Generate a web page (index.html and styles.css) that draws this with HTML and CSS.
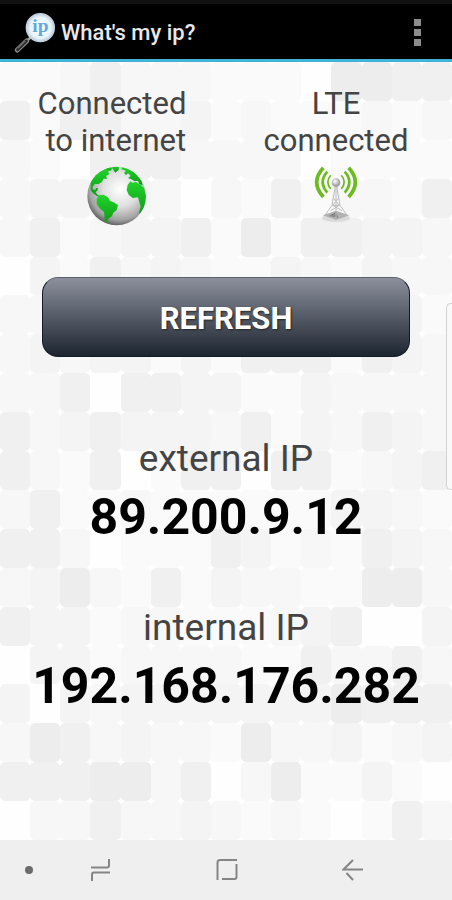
FILE: index.html
```html
<!DOCTYPE html>
<html lang="en">
<head>
	<meta charset="utf-8">
	<meta name="viewport" content="width=device-width, initial-scale=1">
	<title>What's my ip?</title>
	<link rel="stylesheet" href="styles.css">
</head>
<body>
	<header class="action-bar">
		<svg class="logo" viewBox="0 0 126 123" aria-hidden="true">
			<defs>
				<radialGradient id="lens">
					<stop offset="0" stop-color="#ffffff"/>
					<stop offset="0.75" stop-color="#e8f3fb"/>
					<stop offset="1" stop-color="#b9cddb"/>
				</radialGradient>
			</defs>
			<path d="M50 76 L34 91" stroke="#aaa" stroke-width="7"/>
			<path d="M38 87 L10 114" stroke="#8c8c8c" stroke-width="15" stroke-linecap="round"/>
			<path d="M37 87 L11 113" stroke="#2b2b2b" stroke-width="9" stroke-linecap="round"/>
			<path d="M34 87 L12 109" stroke="#b5b5b5" stroke-width="2"/>
			<circle cx="79" cy="47" r="42" fill="url(#lens)" stroke="#c4d3dd" stroke-width="4"/>
			<text class="logo-text" x="79" y="61" text-anchor="middle">ip</text>
		</svg>
		<h1>What's my ip?</h1>
		<button class="menu" aria-label="More options"><i></i><i></i><i></i></button>
	</header>

	<main>
		<div class="mosaic" id="mosaic"></div>

		<div class="content">
			<div class="status-row">
				<div class="status">
					<p>Connected<br>&nbsp;to internet</p>
					<svg class="globe" viewBox="0 0 204 180" aria-hidden="true">
						<defs>
							<radialGradient id="sea" cx="0.56" cy="0.38" r="0.66">
								<stop offset="0" stop-color="#ffffff"/>
								<stop offset="0.45" stop-color="#e0e0e0"/>
								<stop offset="0.8" stop-color="#a2a2a2"/>
								<stop offset="1" stop-color="#4a4a4a"/>
							</radialGradient>
							<linearGradient id="land" x1="0" y1="0" x2="0" y2="1">
								<stop offset="0" stop-color="#1fd62a"/>
								<stop offset="1" stop-color="#0f9a18"/>
							</linearGradient>
							<clipPath id="disc"><circle cx="116" cy="90" r="88"/></clipPath>
						</defs>
						<circle cx="116" cy="90" r="88" fill="url(#sea)"/>
						<g clip-path="url(#disc)" fill="url(#land)">
							<path d="M38 66 L38 48 L52 26 L74 10 L92 5 L100 12 L90 16 L94 24 L84 30 L88 38 L76 38 L72 48 L62 54 L50 54 L44 62 L44 70 L52 72 L54 66 L60 66 L58 74 L52 78 L58 86 L66 90 L56 90 L44 80 L38 72Z"/>
							<path d="M82 10 L94 2 L104 6 L98 14Z M102 2 L124 0 L122 12 L112 20 L106 12Z"/>
							<path d="M134 2 L152 6 L172 22 L190 44 L194 58 L184 54 L180 44 L170 46 L160 40 L150 36 L158 30 L150 22 L144 28 L138 20 L144 14 L130 10Z"/>
							<path d="M149 56 L158 46 L164 50 L174 48 L188 56 L198 66 L204 90 L202 116 L190 138 L182 144 L188 122 L184 108 L180 94 L164 96 L152 86 L146 72Z"/>
							<path d="M56 98 L62 88 L76 86 L90 94 L96 104 L110 110 L120 118 L116 132 L106 140 L102 150 L90 160 L86 172 L80 162 L78 138 L66 128 L56 114Z"/>
						</g>
					</svg>
				</div>
				<div class="status">
					<p>LTE<br>connected</p>
					<svg class="antenna" viewBox="0 0 132 171" fill="none" aria-hidden="true">
						<defs>
							<radialGradient id="ball" cx="0.4" cy="0.35">
								<stop offset="0" stop-color="#ffffff"/>
								<stop offset="1" stop-color="#a3a3a3"/>
							</radialGradient>
						</defs>
						<ellipse cx="66" cy="156" rx="42" ry="12" fill="#dadada"/>
						<path d="M26 148 L66 134 L106 148 L66 162Z" fill="#b2b2b2"/>
						<path d="M44 150 L66 138 L74 156Z" fill="#888"/>
						<path d="M64 60 L54 118 L34 146 M68 60 L78 118 L98 146 M66 62 V156 M58 96 L76 118 L50 134 M74 96 L56 118 L84 134 M54 118 H78" stroke="#bcbcbc" stroke-width="3"/>
						<circle cx="66" cy="50" r="13" fill="url(#ball)"/>
						<g class="waves">
							<path d="M28 5 Q-12 48 28 93 M104 5 Q144 48 104 93" stroke-width="11"/>
							<path d="M40 17 Q12 48 40 80 M92 17 Q120 48 92 80" stroke-width="8"/>
							<path d="M50 28 Q33 48 50 69 M82 28 Q99 48 82 69" stroke-width="5"/>
						</g>
					</svg>
				</div>
			</div>

			<button class="refresh">REFRESH</button>

			<section class="address">
				<h2>external IP</h2>
				<p>89.200.9.12</p>
			</section>
			<section class="address">
				<h2>internal IP</h2>
				<p>192.168.176.282</p>
			</section>
		</div>

		<div class="edge-handle"></div>
	</main>

	<nav class="nav-bar">
		<button aria-label="Hide"><svg viewBox="0 0 22 22"><circle cx="11" cy="11" r="4" fill="#6b6b6b" stroke="none"/></svg></button>
		<button aria-label="Recents"><svg viewBox="0 0 22 22"><path d="M1 8.5 H17 Q19 8.5 19 6.5 V0 M20 13.5 H4 Q2 13.5 2 15.5 V22"/></svg></button>
		<button aria-label="Home"><svg viewBox="0 0 22 22"><path d="M21 1 H4 Q1.500 1 1.500 3.500 V21 M20.500 5 V18 Q20.500 20 18.500 20 H6"/></svg></button>
		<button aria-label="Back"><svg viewBox="0 0 22 22"><path d="M11 1 L1.500 10.500 H21 M4.500 14 L11 21"/></svg></button>
	</nav>

	<script src="script.js"></script>
</body>
</html>
```
FILE: styles.css
```css
* {
	box-sizing: border-box;
}

body {
	margin: 0;
	min-height: 100vh;
	display: flex;
	flex-direction: column;
	font-family: Roboto, "Liberation Sans", sans-serif;
	color: #444;
	background: #fff;
}

h1, h2, p {
	margin: 0;
}

button {
	border: 0;
	padding: 0;
	background: none;
	font-family: inherit;
	cursor: pointer;
}

/* top bar */
.action-bar {
	display: flex;
	align-items: center;
	height: 62px;
	padding: 1px 20px 0 14px;
	background: #000;
	border-top: 4px solid #111;
	border-bottom: 3px solid #41b3d8;
}

.logo {
	width: 42px;
	height: 41px;
}

.logo-text {
	font: bold 58px "Liberation Serif", serif;
	fill: #5fa9df;
}

.action-bar h1 {
	flex: 1;
	margin-left: 5px;
	font-size: 22px;
	font-weight: 500;
	color: #e8e8e8;
}

.menu {
	display: flex;
	flex-direction: column;
	gap: 3px;
	padding: 4px 12px;
	margin-right: -1px;
}

.menu i {
	width: 7px;
	height: 7px;
	background: #8c8c8c;
}

/* tiled background and the content share one grid cell */
main {
	flex: 1;
	display: grid;
	position: relative;
}

.mosaic, .content {
	grid-area: 1 / 1;
}

.mosaic {
	display: grid;
	grid-template-columns: repeat(15, 1fr);
	grid-template-rows: repeat(20, 1fr);
}

.tile {
	border-radius: 5px;
}

.t0 { background: #fefefe; border-radius: 0; }
.t1 { background: #fafafa; }
.t2 { background: #f7f7f7; }
.t3 { background: #f4f4f4; }
.t4 { background: #f0f0f0; }
.t5 { background: #ededed; }

.content {
	position: relative;
	padding-top: 23px;
	text-align: center;
}

.status-row {
	display: flex;
	padding-right: 4px;
}

.status {
	flex: 1;
	display: flex;
	flex-direction: column;
	align-items: center;
	gap: 7px;
}

.status p {
	font-size: 31px;
	line-height: 37px;
	font-weight: 400;
}

.globe {
	width: 68px;
	height: 60px;
}

.antenna {
	width: 44px;
	height: 57px;
}

.waves {
	stroke: #6cbb1f;
}

.refresh {
	display: block;
	width: calc(100% - 84px);
	height: 80px;
	margin: 51px 42px 0;
	padding-top: 3px;
	border: 1px solid #141b24;
	border-top-color: #5b616c;
	border-radius: 16px;
	background: linear-gradient(#8b909c, #5a606b 45%, #1d2530);
	color: #fff;
	font-size: 31px;
	font-weight: 700;
	text-shadow: 1px 1px 2px #222;
}

.address {
	margin-top: 79px;
}

.address + .address {
	margin-top: 53px;
}

.address h2 {
	font-size: 37px;
	line-height: 46px;
	font-weight: 400;
}

.address p {
	font-size: 50px;
	line-height: 70px;
	font-weight: 700;
	color: #000;
}

.edge-handle {
	position: absolute;
	top: 241px;
	right: 0;
	width: 6px;
	height: 187px;
	border: 1px solid #d2d2d2;
	border-right: 0;
	border-radius: 5px 0 0 5px;
	background: #f9f9f9;
}

/* system buttons */
.nav-bar {
	display: grid;
	grid-template-columns: 58fr 85fr 167fr 85fr 57fr;
	height: 60px;
	background: #efefef;
}

.nav-bar svg {
	display: block;
	width: 22px;
	height: 22px;
	margin: 0 auto;
	fill: none;
	stroke: #858585;
	stroke-width: 2;
}
```
FILE: script.js
```js
// Shade of each background tile, 0 is lightest and 5 is darkest
const shades = [
	'112422211105544',
	'414422312111212',
	'210444222201111',
	'233232021412214',
	'241233415144332',
	'031423211321322',
	'223232322232231',
	'232331314441432',
	'224044331132222',
	'423433324132432',
	'421401440441234',
	'241121111113321',
	'442011143121432',
	'235214132211552',
	'433122111234003',
	'033122221142242',
	'303233333335444',
	'254232215223123',
	'444552402511310',
	'022422321210142'
];

const mosaic = document.getElementById('mosaic');

shades.join('').split('').forEach((shade) => {
	const tile = document.createElement('div');
	tile.className = 'tile t' + shade;
	mosaic.appendChild(tile);
});
```
